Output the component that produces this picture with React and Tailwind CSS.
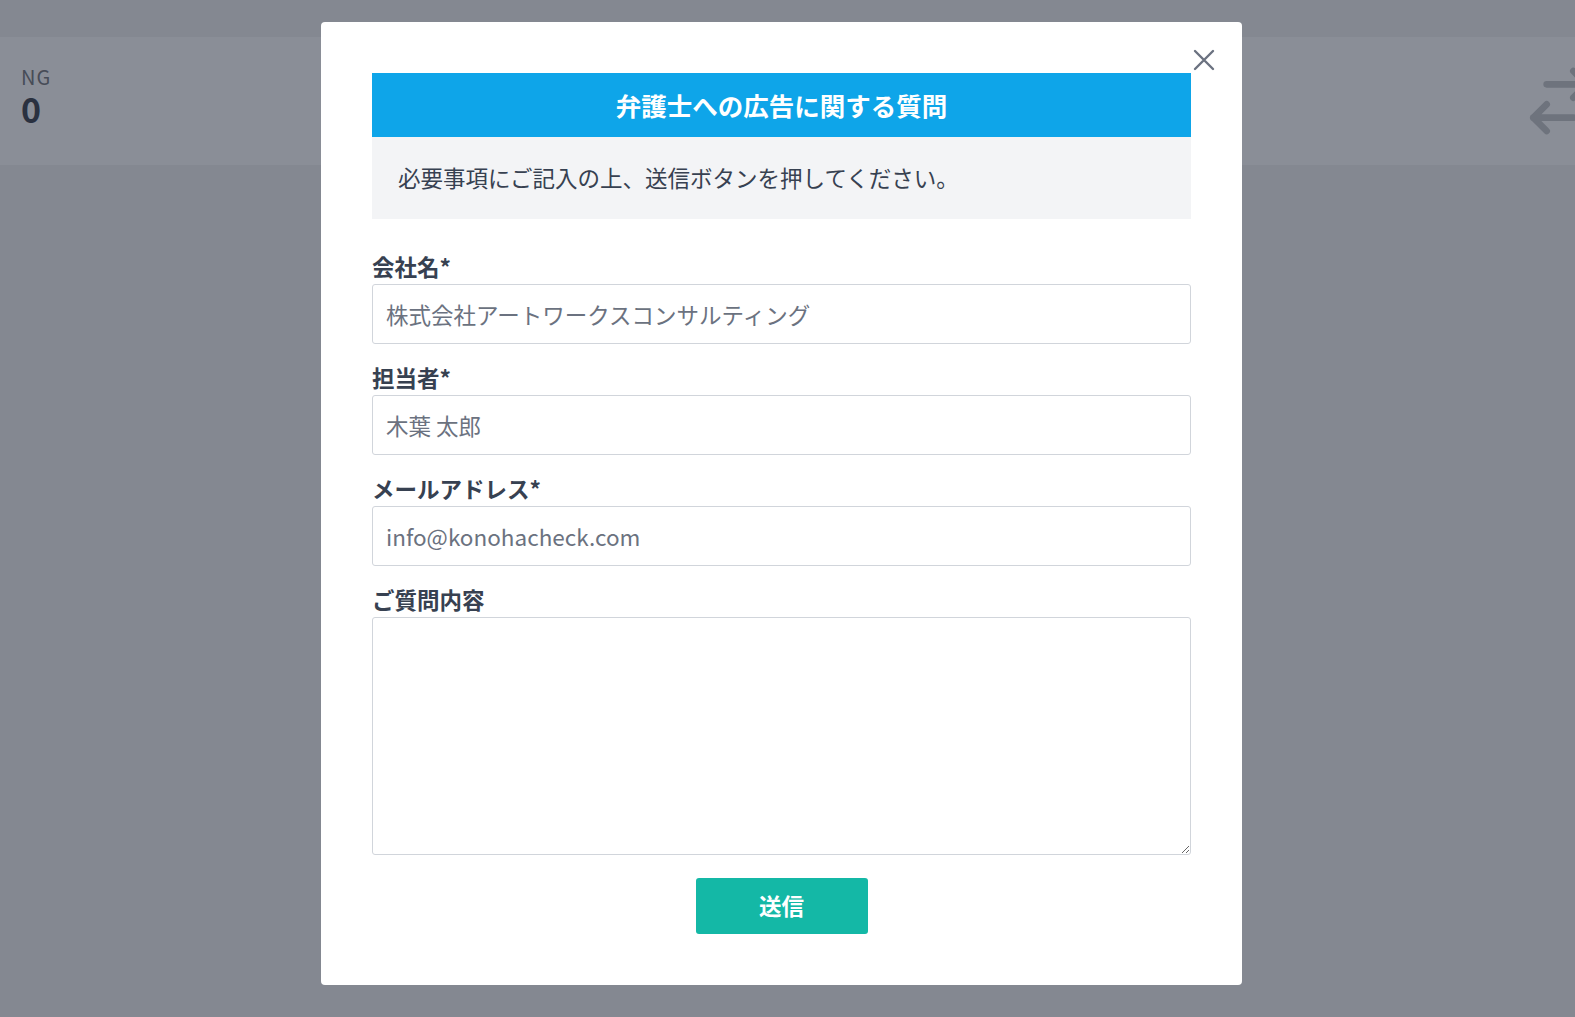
import React, { useState } from "react";

const fields = [
  { name: "company", label: "会社名*", placeholder: "株式会社アートワークスコンサルティング" },
  { name: "person", label: "担当者*", placeholder: "木葉 太郎" },
  { name: "email", label: "メールアドレス*", placeholder: "info@konohacheck.com" },
];

export default function App() {
  const [formData, setFormData] = useState({ company: "", person: "", email: "", question: "" });

  const handleChange = (e) => {
    setFormData({ ...formData, [e.target.name]: e.target.value });
  };

  return (
    <div className="relative min-h-screen overflow-hidden bg-[#848891] font-['Noto_Sans_CJK_JP','Noto_Sans',sans-serif]">
      {/* page behind the modal */}
      <div className="pt-[37px]">
        <div className="flex h-[128px] items-center justify-between overflow-hidden bg-[#8a8e97] pl-[21px]">
          <div className="flex flex-col gap-[2px] pb-[10px]">
            <span className="text-[20px] leading-[24px] tracking-[1px] text-[#474c57]">NG</span>
            <span className="text-[34px] font-bold leading-[36px] text-[#2a3140]">0</span>
          </div>
          <svg
            className="-mr-[25px] h-[80px] w-[80px] shrink-0 text-[#6e737d]"
            fill="none"
            viewBox="0 0 24 24"
            strokeWidth={2}
            stroke="currentColor"
          >
            <path strokeLinecap="round" strokeLinejoin="round" d="M8 7h12m0 0-4-4m4 4-4 4m0 6H4m0 0 4 4m-4-4 4-4" />
          </svg>
        </div>
      </div>

      {/* Modal */}
      <div className="absolute inset-0 pl-[321px] pt-[22px]">
        <div className="relative w-[921px] rounded-[4px] bg-white p-[51px]">
          <button className="absolute right-[27px] top-[27px] flex h-[22px] w-[22px] items-center justify-center text-[#6b7280]">
            <svg viewBox="0 0 22 22" className="h-[22px] w-[22px]" stroke="currentColor" strokeWidth={2.4} strokeLinecap="round">
              <path d="M2 2 20 20M20 2 2 20" />
            </svg>
          </button>

          <div className="flex h-[64px] items-center justify-center bg-[#0ea5e9] text-[25.5px] font-bold text-white">
            弁護士への広告に関する質問
          </div>
          <div className="flex h-[82px] items-center bg-[#f3f4f6] px-[26px] text-[22.5px] text-[#374151]">
            必要事項にご記入の上、送信ボタンを押してください。
          </div>

          <form className="mt-[33px] flex flex-col gap-[19px]" onSubmit={(e) => e.preventDefault()}>
            {fields.map((f) => (
              <div key={f.name}>
                <label className="mb-[4px] block text-[22.5px] font-bold leading-[28px] text-[#374151]">{f.label}</label>
                <input
                  name={f.name}
                  value={formData[f.name]}
                  onChange={handleChange}
                  type="text"
                  placeholder={f.placeholder}
                  className="block h-[60px] w-full rounded-[3px] border border-[#d1d5db] px-[13px] text-[22.5px] text-[#374151] placeholder:text-[#6b7280] focus:outline-none"
                />
              </div>
            ))}
            <div>
              <label className="mb-[4px] block text-[22.5px] font-bold leading-[28px] text-[#374151]">ご質問内容</label>
              <textarea
                name="question"
                value={formData.question}
                onChange={handleChange}
                className="block h-[238px] w-full rounded-[3px] border border-[#d1d5db] px-[13px] py-[10px] text-[22.5px] text-[#374151] focus:outline-none"
              />
            </div>
          </form>

          <div className="mt-[23px] flex justify-center">
            <button
              type="submit"
              className="h-[56px] w-[172px] rounded-[3px] bg-[#14b8a6] text-[22.5px] font-semibold text-white"
            >
              送信
            </button>
          </div>
        </div>
      </div>
    </div>
  );
}
